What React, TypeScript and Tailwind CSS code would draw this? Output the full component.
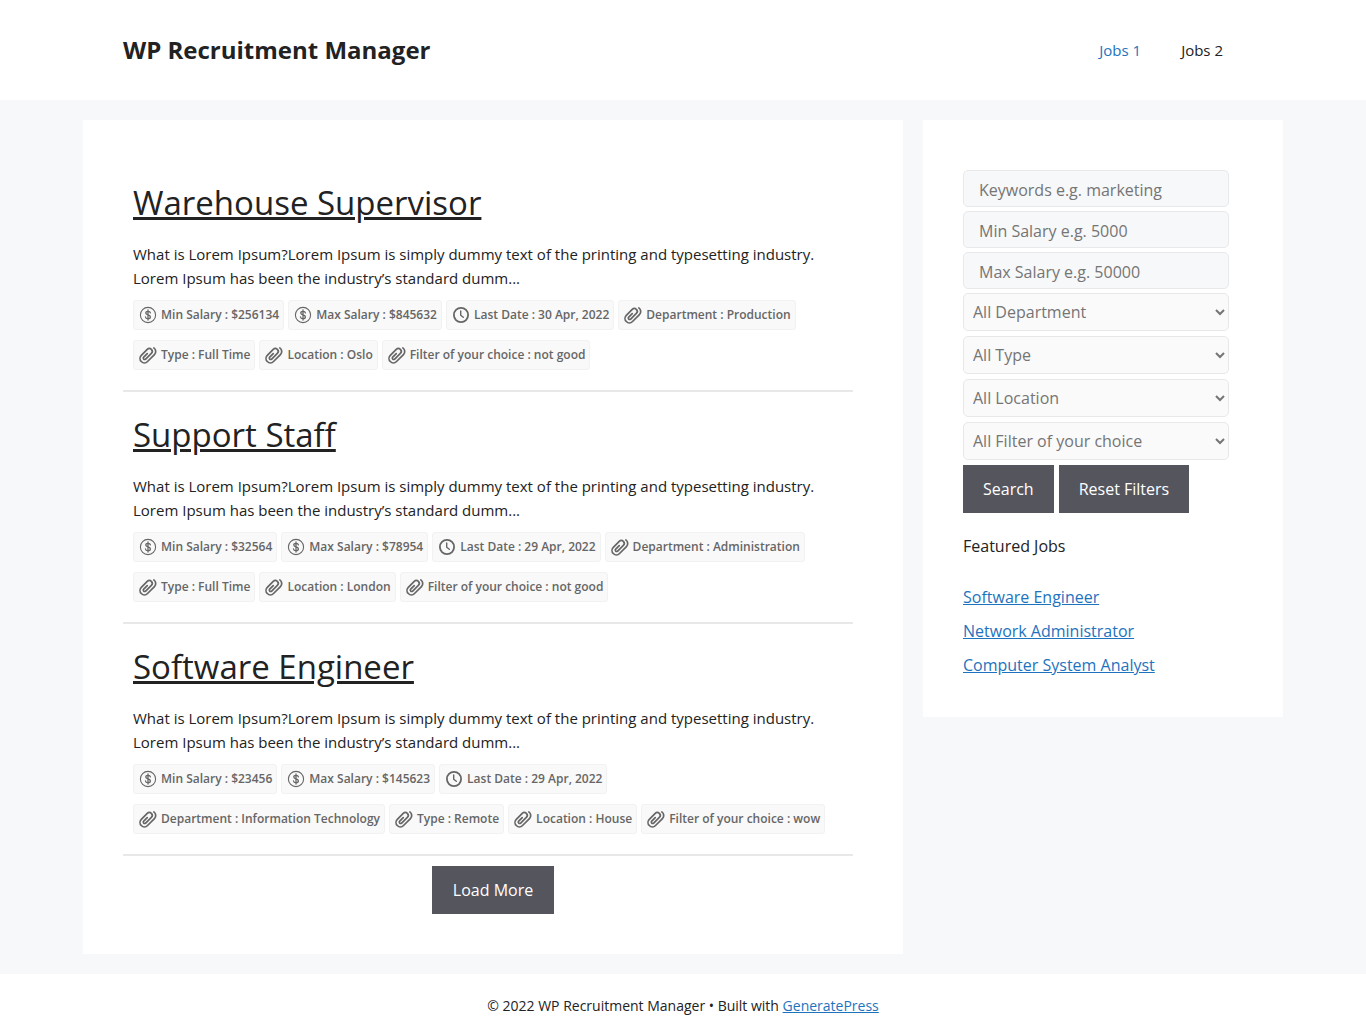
import React from "react";

type IconName = "dollar" | "clock" | "clip";
type Job = { title: string; tags: [IconName, string][] };

const jobs: Job[] = [
  {
    title: "Warehouse Supervisor",
    tags: [
      ["dollar", "Min Salary : $256134"],
      ["dollar", "Max Salary : $845632"],
      ["clock", "Last Date : 30 Apr, 2022"],
      ["clip", "Department : Production"],
      ["clip", "Type : Full Time"],
      ["clip", "Location : Oslo"],
      ["clip", "Filter of your choice : not good"],
    ],
  },
  {
    title: "Support Staff",
    tags: [
      ["dollar", "Min Salary : $32564"],
      ["dollar", "Max Salary : $78954"],
      ["clock", "Last Date : 29 Apr, 2022"],
      ["clip", "Department : Administration"],
      ["clip", "Type : Full Time"],
      ["clip", "Location : London"],
      ["clip", "Filter of your choice : not good"],
    ],
  },
  {
    title: "Software Engineer",
    tags: [
      ["dollar", "Min Salary : $23456"],
      ["dollar", "Max Salary : $145623"],
      ["clock", "Last Date : 29 Apr, 2022"],
      ["clip", "Department : Information Technology"],
      ["clip", "Type : Remote"],
      ["clip", "Location : House"],
      ["clip", "Filter of your choice : wow"],
    ],
  },
];

const keywordFields = ["Keywords e.g. marketing", "Min Salary e.g. 5000", "Max Salary e.g. 50000"];
const selectFields = ["All Department", "All Type", "All Location", "All Filter of your choice"];
const featured = ["Software Engineer", "Network Administrator", "Computer System Analyst"];

function TagIcon({ name }: { name: IconName }) {
  return (
    <svg
      viewBox="0 0 18 18"
      className="size-[18px] shrink-0"
      fill="none"
      stroke="currentColor"
      strokeLinecap="round"
      strokeLinejoin="round"
      aria-hidden="true"
    >
      {name === "dollar" && (
        <>
          <circle cx="9" cy="9" r="7.6" strokeWidth="1.1" />
          <path
            d="M11.4 6.9C11.2 5.8 10.3 5.3 9 5.3S6.8 5.9 6.8 7c0 2.6 4.6 1.3 4.6 4 0 1.1-1 1.8-2.4 1.8S6.7 12.2 6.5 11M9 3.9v10.2"
            strokeWidth="1.3"
          />
        </>
      )}
      {name === "clock" && (
        <>
          <circle cx="9" cy="9" r="7.1" strokeWidth="1.8" />
          <path d="M8.7 5v4.2l2.6 2" strokeWidth="1.4" />
        </>
      )}
      {name === "clip" && (
        <path
          d="M-.5-9.3A4.4 4.4 0 0 1 4.7-5V4.8A4.4 4.4 0 0 1-4.1 4.8V-3.6A2.9 2.9 0 0 1 1.7-3.6V4.4A1.4 1.4 0 0 1-1.1 4.4V-.6"
          transform="translate(8.6 8.8) rotate(45)"
          strokeWidth="1.7"
        />
      )}
    </svg>
  );
}

function JobItem({ job }: { job: Job }) {
  return (
    <article className="border-b-2 border-[#e8e8e9] px-[10px] pt-[22px] pb-5">
      <h2 className="mb-[18px] text-[33px] leading-[42px]">
        <a href="#" className="underline">
          {job.title}
        </a>
      </h2>
      <p className="mb-[10px] text-[15px] leading-6">
        What is Lorem Ipsum?Lorem Ipsum is simply dummy text of the printing and typesetting industry. Lorem Ipsum has
        been the industry’s standard dumm...
      </p>
      <ul className="flex flex-wrap gap-x-1 gap-y-[10px]">
        {job.tags.map(([icon, label]) => (
          <li
            key={label}
            className="flex h-[30px] items-center gap-1 rounded-[3px] border border-[#f2f2f2] bg-[#f9f9f9] pr-1 pl-[5px] text-[12px] font-semibold text-[#666666]"
          >
            <TagIcon name={icon} />
            {label}
          </li>
        ))}
      </ul>
    </article>
  );
}

export default function App() {
  return (
    <div className="min-h-screen bg-[#f7f8f9] font-['Open_Sans','Noto_Sans',sans-serif] text-[#222222]">
      <header className="bg-white">
        <div className="mx-auto flex h-[100px] max-w-[1200px] items-center justify-between px-10">
          <a href="#" className="text-[24px] font-bold">
            WP Recruitment Manager
          </a>
          <nav className="flex gap-10 pr-5 text-[15px]">
            <a href="#" className="text-[#1e73be]">
              Jobs 1
            </a>
            <a href="#">Jobs 2</a>
          </nav>
        </div>
      </header>

      <div className="mx-auto flex max-w-[1200px] items-start gap-5 py-5">
        <main className="min-w-0 flex-1 bg-white p-10 pr-[50px]">
          {jobs.map((job) => (
            <JobItem key={job.title} job={job} />
          ))}
          <div className="flex justify-center pt-[10px] pl-[10px]">
            <button type="button" className="h-12 bg-[#55555e] px-[21px] text-[16px] text-white">
              Load More
            </button>
          </div>
        </main>

        <aside className="w-[360px] shrink-0 bg-white px-10 pt-[50px] pb-10">
          <form className="text-[16px] text-[#757575]" onSubmit={(e) => e.preventDefault()}>
            <div className="mb-1 flex flex-col gap-1 pr-[14px]">
              {keywordFields.map((label) => (
                <input
                  key={label}
                  type="text"
                  aria-label={label}
                  placeholder={label}
                  className="h-[37px] w-full rounded-[5px] border border-[#e8e9ea] bg-[#f7f8f9] px-[15px] pt-[2px] placeholder:text-[#757575]"
                />
              ))}
            </div>
            <div className="mb-[5px] flex flex-col gap-[5px] pr-[14px]">
              {selectFields.map((label) => (
                <select
                  key={label}
                  aria-label={label}
                  className="h-[38px] w-full rounded-[5px] border border-[#e8e8e8] bg-[#fafafa] px-[5px] text-[#757575]"
                >
                  <option>{label}</option>
                </select>
              ))}
            </div>
            <div className="flex gap-[5px] text-white">
              <button type="submit" className="h-12 bg-[#55555e] px-5">
                Search
              </button>
              <button type="reset" className="h-12 bg-[#55555e] px-5">
                Reset Filters
              </button>
            </div>
          </form>
          <h2 className="mt-[21px] mb-[27px] text-[16px] leading-6">Featured Jobs</h2>
          <ul className="flex flex-col gap-[10px] text-[16px] leading-6 text-[#1e73be]">
            {featured.map((name) => (
              <li key={name}>
                <a href="#" className="underline">
                  {name}
                </a>
              </li>
            ))}
          </ul>
        </aside>
      </div>

      <footer className="bg-white pt-[21px] pb-[19px] text-center text-[14px] leading-[22px]">
        © 2022 WP Recruitment Manager • Built with{" "}
        <a href="#" className="text-[#1e73be] underline">
          GeneratePress
        </a>
      </footer>
    </div>
  );
}
